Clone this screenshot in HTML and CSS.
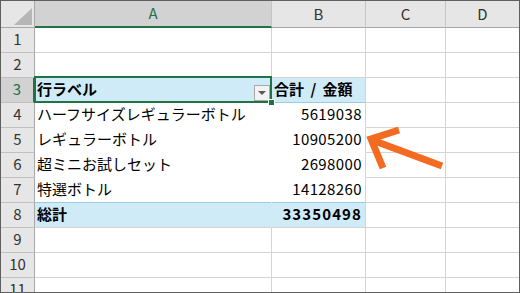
FILE: index.html
```html
<!DOCTYPE html>
<html lang="ja">
<head>
    <meta charset="UTF-8">
    <title>ピボットテーブル</title>
    <link rel="stylesheet" href="styles.css">
</head>
<body>
    <div class="sheet">
        <div class="grid">
            <div class="corner"><span class="corner-mark"></span></div>
            <div class="col-head sel">A</div>
            <div class="col-head">B</div>
            <div class="col-head">C</div>
            <div class="col-head last">D</div>

            <div class="row-head">1</div>
            <div class="cell"></div><div class="cell"></div><div class="cell"></div><div class="cell last"></div>

            <div class="row-head">2</div>
            <div class="cell"></div><div class="cell"></div><div class="cell"></div><div class="cell last"></div>

            <div class="row-head sel">3</div>
            <div class="cell pv-head col-a active">
                <span>行ラベル</span>
                <span class="filter"></span>
            </div>
            <div class="cell pv-head">合計 / 金額</div>
            <div class="cell"></div><div class="cell last"></div>

            <div class="row-head">4</div>
            <div class="cell pv-body col-a">ハーフサイズレギュラーボトル</div>
            <div class="cell pv-body num">5619038</div>
            <div class="cell"></div><div class="cell last"></div>

            <div class="row-head">5</div>
            <div class="cell pv-body col-a">レギュラーボトル</div>
            <div class="cell pv-body num">10905200</div>
            <div class="cell"></div><div class="cell last"></div>

            <div class="row-head">6</div>
            <div class="cell pv-body col-a">超ミニお試しセット</div>
            <div class="cell pv-body num">2698000</div>
            <div class="cell"></div><div class="cell last"></div>

            <div class="row-head">7</div>
            <div class="cell pv-body pv-end col-a">特選ボトル</div>
            <div class="cell pv-body pv-end num">14128260</div>
            <div class="cell"></div><div class="cell last"></div>

            <div class="row-head">8</div>
            <div class="cell pv-total col-a">総計</div>
            <div class="cell pv-total num">33350498</div>
            <div class="cell"></div><div class="cell last"></div>

            <div class="row-head">9</div>
            <div class="cell"></div><div class="cell"></div><div class="cell"></div><div class="cell last"></div>

            <div class="row-head">10</div>
            <div class="cell"></div><div class="cell"></div><div class="cell"></div><div class="cell last"></div>

            <div class="row-head">11</div>
            <div class="cell"></div><div class="cell"></div><div class="cell"></div><div class="cell last"></div>
        </div>

        <!-- callout arrow pointing at B5 -->
        <svg class="arrow" width="520" height="293" viewBox="0 0 520 293">
            <path d="M399 130 L371 139 L383 168" fill="none" stroke="#f36a21" stroke-width="7" stroke-linejoin="miter"/>
            <path d="M372 140 L442 166" fill="none" stroke="#f36a21" stroke-width="7"/>
        </svg>
    </div>
</body>
</html>
```

FILE: styles.css
```css
body {
    margin: 0;
    background: white;
    font-family: "Noto Sans CJK JP", sans-serif;
}
.sheet {
    position: relative;
    width: 520px;
    height: 293px;
    box-sizing: border-box;
    border: 1px solid #5f5f5f;
    overflow: hidden;
}
.grid {
    display: grid;
    grid-template-columns: 34px 237px 94px 80px 73px;
    grid-template-rows: 27px repeat(11, 25px);
}
.grid > div {
    box-sizing: border-box;
}
.corner {
    background: #e6e6e6;
    border-right: 1px solid #a8a8a8;
    border-bottom: 1px solid #a8a8a8;
    position: relative;
}
.corner-mark {
    position: absolute;
    left: 13px;
    top: 7px;
    width: 0;
    height: 0;
    border-left: 18px solid transparent;
    border-bottom: 17px solid #b6b6b6;
}
.col-head {
    background: #e6e6e6;
    border-right: 1px solid #c4c4c4;
    border-bottom: 1px solid #a8a8a8;
    display: flex;
    align-items: center;
    justify-content: center;
    padding-bottom: 2px;
    font-size: 15px;
    line-height: 1;
    color: #333;
}
.col-head.sel {
    background: #d2d2d2;
    color: #217346;
    border-bottom: 2px solid #217346;
}
.col-head.last {
    border-right: none;
}
.row-head {
    background: #e6e6e6;
    border-right: 1px solid #a8a8a8;
    border-bottom: 1px solid #c0c0c0;
    display: flex;
    align-items: center;
    justify-content: center;
    padding-bottom: 3px;
    font-size: 15px;
    line-height: 1;
    color: #333;
}
.row-head.sel {
    background: #d2d2d2;
    color: #217346;
    border-right: 2px solid #217346;
}
.cell {
    border-right: 1px solid #d4d4d4;
    border-bottom: 1px solid #d4d4d4;
    display: flex;
    align-items: center;
    padding: 0 3px 3px 2px;
    font-size: 15px;
    line-height: 1;
    color: #000;
    white-space: nowrap;
}
.cell.last {
    border-right: none;
}
.num {
    justify-content: flex-end;
    letter-spacing: 0.4px;
}
.pv-head {
    background: #d0ebf8;
    font-weight: bold;
    border-bottom-color: #9ccbe8;
    word-spacing: 3px;
}
.pv-head.col-a {
    border-right-color: #d0ebf8;
}
.pv-body {
    border-bottom-color: white;
}
.pv-body.col-a {
    border-right-color: white;
}
.pv-body.pv-end {
    border-bottom-color: #9ccbe8;
}
.pv-total {
    background: #d0ebf8;
    font-weight: bold;
}
.pv-total.col-a {
    border-right-color: #d0ebf8;
}
.pv-total.num {
    letter-spacing: 1.1px;
}
.active {
    position: relative;
    z-index: 2;
}
.active::after {
    content: "";
    position: absolute;
    left: -1px;
    top: -2px;
    right: -1px;
    bottom: -1px;
    border: 2px solid #217346;
    box-sizing: border-box;
}
.active::before {
    content: "";
    position: absolute;
    right: -4px;
    bottom: -4px;
    width: 5px;
    height: 5px;
    background: #217346;
    border: 1px solid white;
    z-index: 3;
}
.filter {
    margin-left: auto;
    margin-right: -2px;
    align-self: flex-end;
    margin-bottom: -2px;
    width: 16px;
    height: 16px;
    box-sizing: border-box;
    border: 1px solid #a9a9a9;
    background: #f3f3f3;
    display: flex;
    align-items: center;
    justify-content: center;
}
.filter::after {
    content: "";
    width: 0;
    height: 0;
    border-left: 4px solid transparent;
    border-right: 4px solid transparent;
    border-top: 4px solid #5a5a5a;
}
.arrow {
    position: absolute;
    left: -1px;
    top: -1px;
    pointer-events: none;
}
```
